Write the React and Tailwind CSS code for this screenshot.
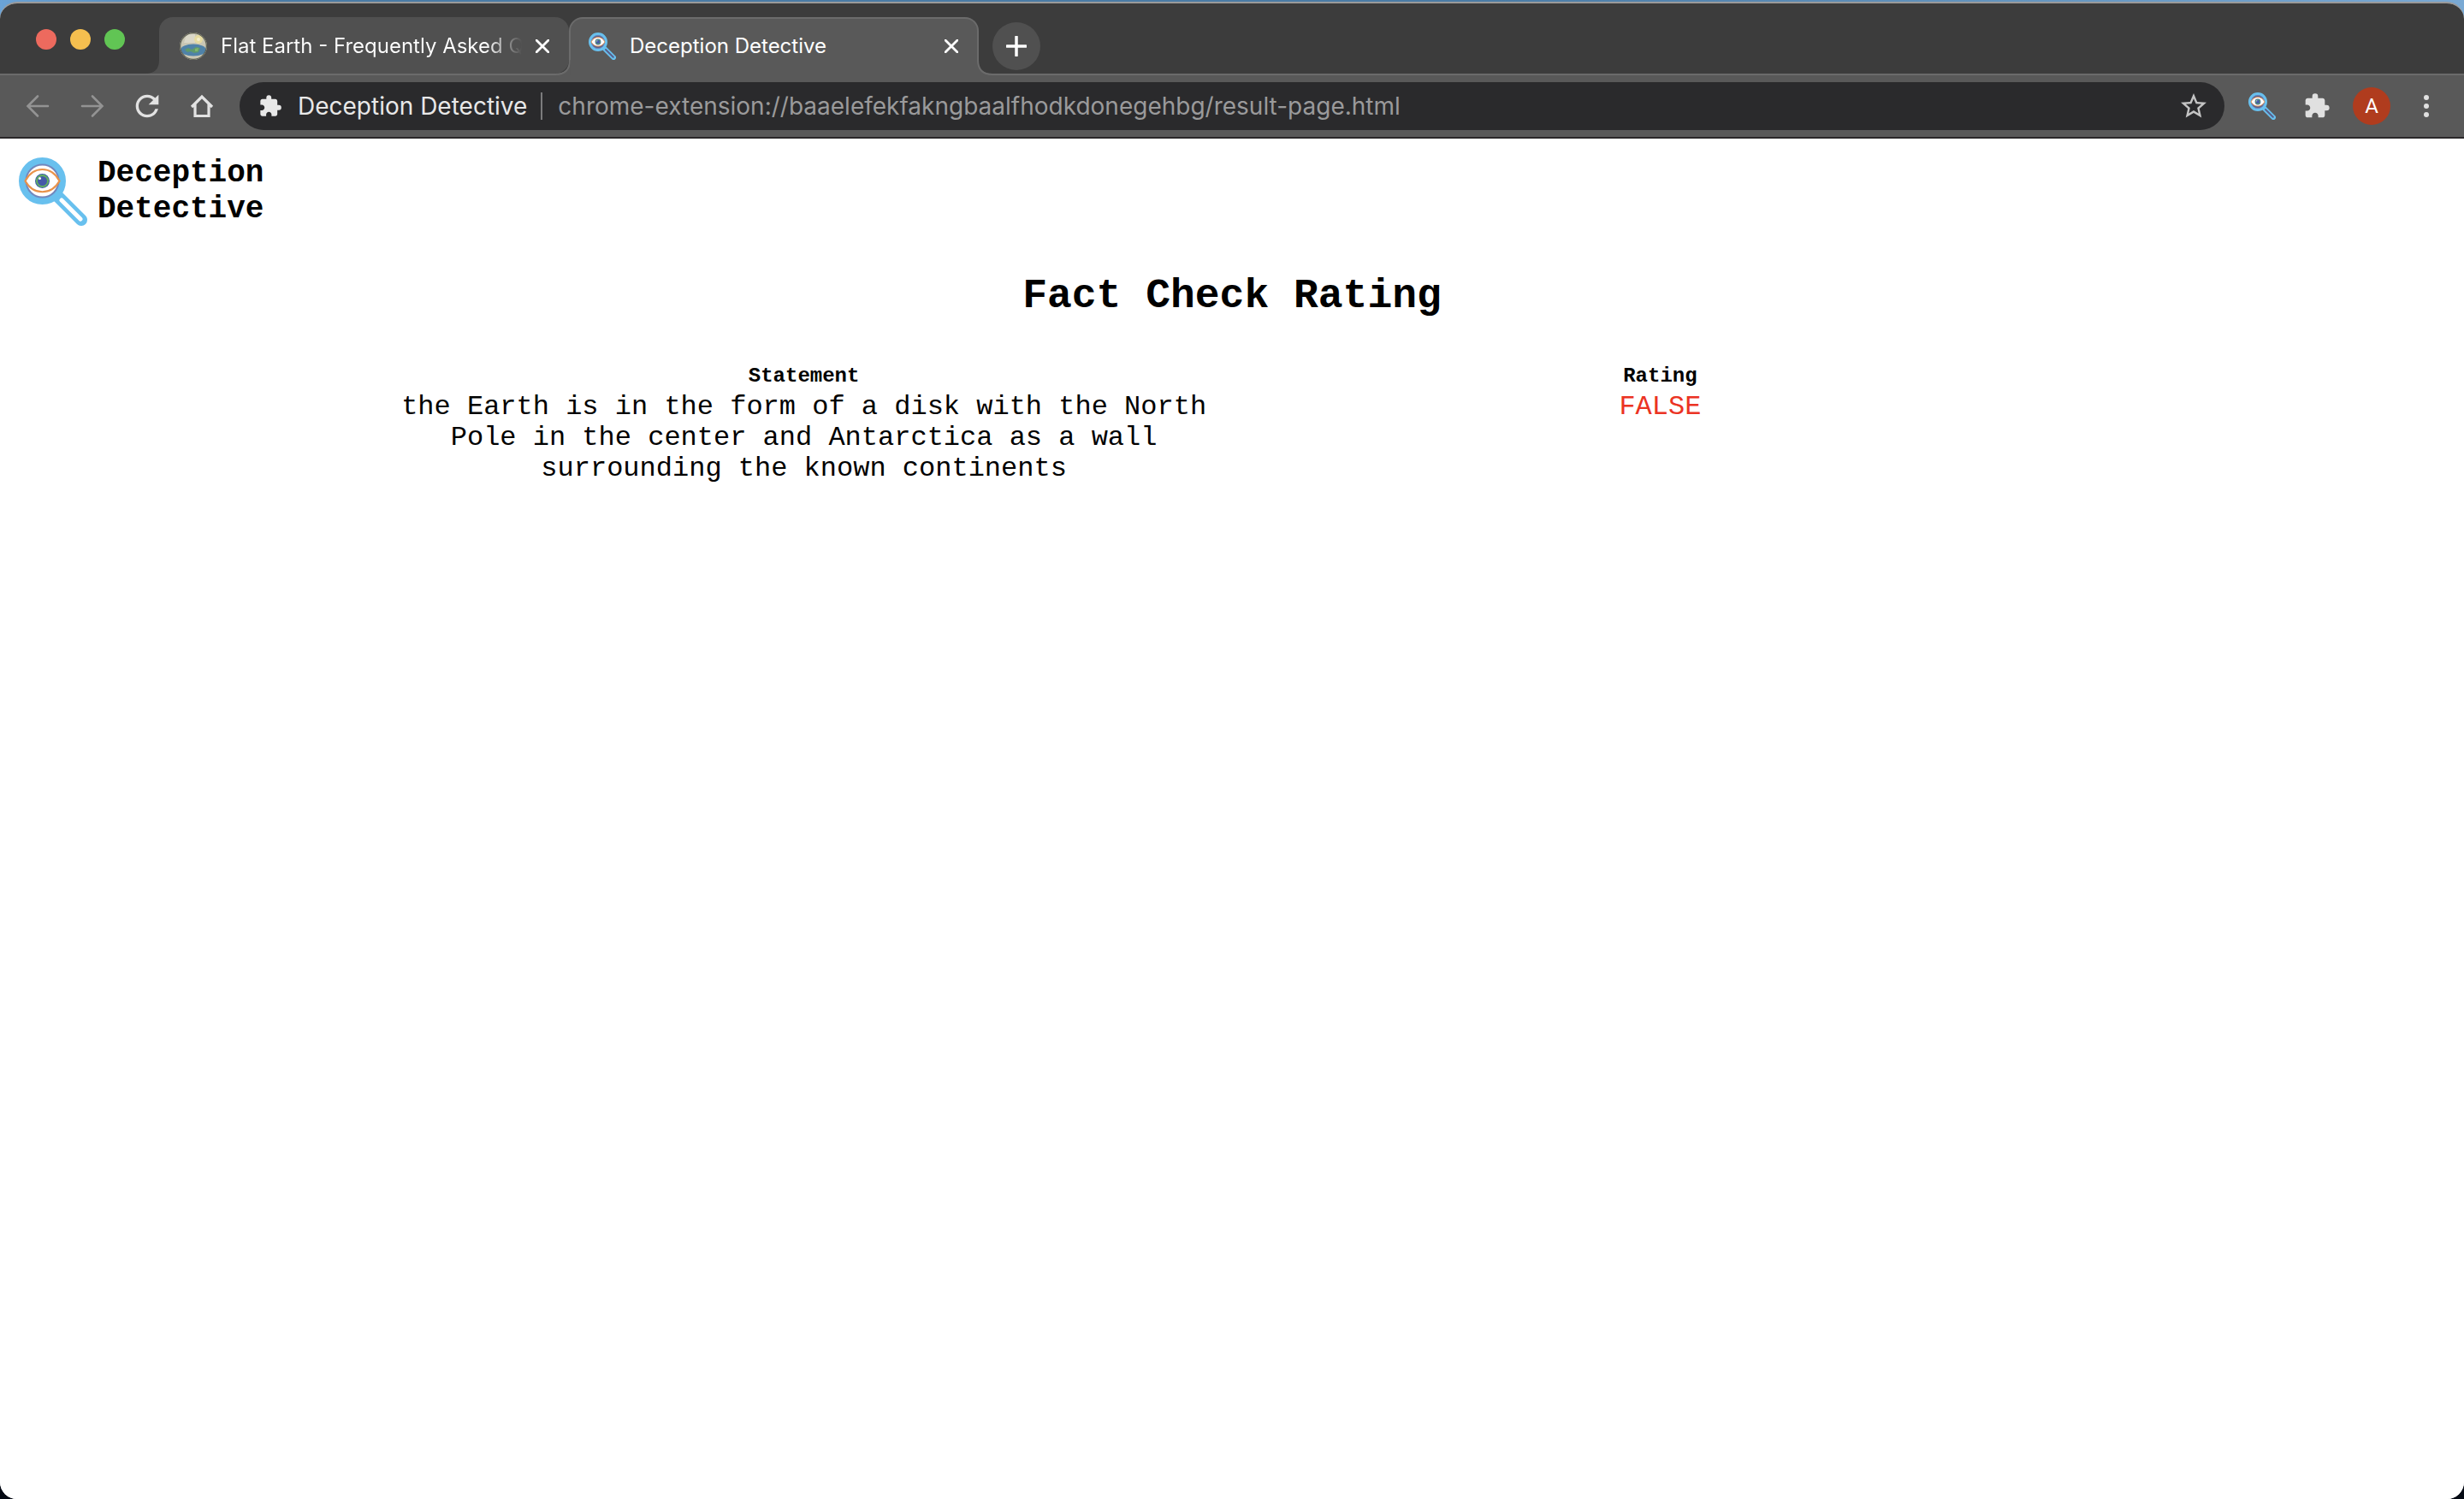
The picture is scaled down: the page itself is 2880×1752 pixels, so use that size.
import { MdExtension, MdStarBorder, MdRefresh } from "react-icons/md";

function Magnifier({ className, lens = "#ffffff" }) {
  return (
    <svg viewBox="0 0 80 80" className={className} aria-hidden="true">
      <path d="M46 46 L73 73" stroke="#68c0ee" strokeWidth="14" strokeLinecap="round" />
      <path d="M50 50 L72 72" stroke={lens} strokeWidth="5" strokeLinecap="round" />
      <circle cx="27.500" cy="27.500" r="23.500" fill={lens} stroke="#68c0ee" strokeWidth="8" />
      <circle cx="27.500" cy="27.500" r="19" fill="none" stroke="#7187bd" strokeWidth="2" />
      <path d="M7.500 27.500 C17 9.500 38 9.500 47.500 27.500 C38 44.500 17 44.500 7.500 27.500 Z" fill="#ffffff" stroke="#e8924a" strokeWidth="2.200" />
      <circle cx="27.500" cy="27.500" r="8.500" fill="#3f5da8" />
      <circle cx="27.500" cy="27.500" r="6.500" fill="#4459a8" stroke="#62b05f" strokeWidth="2" />
      <circle cx="24.500" cy="24.500" r="1.500" fill="#ffffff" />
    </svg>
  );
}

function EarthIcon() {
  return (
    <svg viewBox="0 0 32 32" className="size-8 shrink-0" aria-hidden="true">
      <defs>
        <clipPath id="globe">
          <circle cx="16" cy="16" r="16" />
        </clipPath>
      </defs>
      <g clipPath="url(#globe)">
        <rect width="32" height="32" fill="#c9c6b4" />
        <path d="M8 2H18V12H5Z" fill="#dad7c8" />
        <circle cx="22" cy="8" r="5" fill="#e6dba0" />
        <circle cx="22" cy="8" r="2" fill="#f3eecb" />
        <ellipse cx="16" cy="20.500" rx="15" ry="7" fill="#4f82a8" />
        <path d="M6 20L10 18L14 20L19 17L24 18L22 23L17 24L13 22L9 23Z" fill="#5f9a6b" />
        <path d="M18 19L22 18L21 22L18 22Z" fill="#7fb56f" />
        <circle cx="16" cy="16" r="15.500" fill="none" stroke="#5f6153" strokeWidth="1.500" />
      </g>
    </svg>
  );
}

function Cross() {
  return (
    <svg viewBox="0 0 16 16" className="size-4" aria-hidden="true">
      <path d="M0 0L16 16M16 0L0 16" stroke="#ffffff" strokeWidth="2.800" />
    </svg>
  );
}

function TabStrip() {
  return (
    <div className="flex h-[82px] items-stretch bg-[#3c3c3c] pt-4">
      <div className="flex w-[186px] shrink-0 items-start justify-between pt-[14px] pr-10 pl-[42px]">
        <button aria-label="Close window" className="size-6 rounded-full bg-[#ed6a5e]" />
        <button aria-label="Minimize window" className="size-6 rounded-full bg-[#f5bf4f]" />
        <button aria-label="Zoom window" className="size-6 rounded-full bg-[#61c554]" />
      </div>
      <div role="tablist" className="flex">
        <div className="relative flex w-[479px] items-center gap-4 rounded-t-2xl rounded-br-2xl bg-[#505050] pt-[2px] pr-[23px] pl-6">
          <svg viewBox="0 0 16 16" className="absolute bottom-0 -left-4 size-4" aria-hidden="true">
            <path d="M16 0V16H0Q16 16 16 0Z" fill="#505050" />
          </svg>
          <EarthIcon />
          <button role="tab" aria-selected="false" className="min-w-0 flex-1 bg-linear-to-r from-white from-88% to-transparent bg-clip-text text-left text-2xl whitespace-nowrap text-transparent">
            Flat Earth - Frequently Asked Q
          </button>
          <button aria-label="Close Flat Earth tab">
            <Cross />
          </button>
        </div>
        <div className="relative -mb-[2px] flex w-[479px] items-center gap-4 rounded-t-2xl border-2 border-b-0 border-[#6b6b6b] bg-[#595959] pr-[22px] pb-[2px] pl-[21px]">
          <svg viewBox="0 0 18 18" className="absolute bottom-0 -left-[18px] size-[18px]" aria-hidden="true">
            <path d="M18 0V18H0V16Q17 16 17 0Z" fill="#595959" />
            <path d="M0 17Q17 17 17 0" fill="none" stroke="#6b6b6b" strokeWidth="2" />
            <path d="M18 0V18" stroke="#595959" strokeWidth="1" />
          </svg>
          <svg viewBox="0 0 18 18" className="absolute -right-[18px] bottom-0 size-[18px]" aria-hidden="true">
            <path d="M0 0V18H18V16Q1 16 1 0Z" fill="#595959" />
            <path d="M18 17Q1 17 1 0" fill="none" stroke="#6b6b6b" strokeWidth="2" />
          </svg>
          <Magnifier className="size-8 shrink-0" lens="#595f8a" />
          <button role="tab" aria-selected="true" className="flex-1 text-left text-2xl whitespace-nowrap text-white">
            Deception Detective
          </button>
          <button aria-label="Close Deception Detective tab">
            <Cross />
          </button>
        </div>
      </div>
      <button aria-label="New tab" className="mt-[6px] ml-4 flex size-14 items-center justify-center rounded-full bg-[#505050]">
        <svg viewBox="0 0 24 24" className="size-6" aria-hidden="true">
          <path d="M12 1V23M1 12H23" stroke="#ffffff" strokeWidth="3.500" strokeLinecap="round" />
        </svg>
      </button>
    </div>
  );
}

function Toolbar() {
  return (
    <div className="flex h-[76px] items-center border-t-2 border-b-2 border-t-[#6b6b6b] border-b-[#2a2829] bg-[#595959] pr-6 pl-6">
      <nav className="flex gap-6">
        <button aria-label="Back" className="flex size-10 items-center justify-center">
          <svg viewBox="0 0 28 28" className="size-7" fill="none" stroke="#939393" strokeWidth="2.600" strokeLinecap="round" aria-hidden="true">
            <path d="M26 14H3M14 2.500L2.500 14L14 25.500" />
          </svg>
        </button>
        <button aria-label="Forward" className="flex size-10 items-center justify-center">
          <svg viewBox="0 0 28 28" className="size-7" fill="none" stroke="#939393" strokeWidth="2.600" strokeLinecap="round" aria-hidden="true">
            <path d="M2 14H25M14 2.500L25.500 14L14 25.500" />
          </svg>
        </button>
        <button aria-label="Reload" className="flex size-10 items-center justify-center">
          <MdRefresh className="size-10 text-[#e2e2e2]" />
        </button>
        <button aria-label="Home" className="flex size-10 items-center justify-center">
          <svg viewBox="0 0 28 28" className="size-7" fill="none" stroke="#e2e2e2" strokeWidth="3.200" aria-hidden="true">
            <path d="M2 15L14 3L26 15M6 12V25.500H22V12" />
          </svg>
        </button>
      </nav>
      <div className="ml-6 flex h-14 flex-1 items-center rounded-full bg-[#2a2a2c] pr-[18px] pl-[22px]">
        <MdExtension className="size-7 shrink-0 text-[#e8e8e8]" />
        <span className="ml-[18px] text-[28px] whitespace-nowrap text-[#e8e8e8]">Deception Detective</span>
        <span className="mr-[18px] ml-4 h-8 w-[2px] bg-[#7b7b7c]" />
        <input
          aria-label="Address"
          defaultValue="chrome-extension://baaelefekfakngbaalfhodkdonegehbg/result-page.html"
          className="min-w-0 flex-1 bg-transparent text-[28px] text-[#9a9a9b] outline-none"
        />
        <button aria-label="Bookmark this page">
          <MdStarBorder className="size-9 text-[#c4c4c4]" />
        </button>
      </div>
      <div className="ml-7 flex items-center">
        <button aria-label="Deception Detective extension">
          <Magnifier className="size-8" lens="#595f8a" />
        </button>
        <button aria-label="Extensions" className="ml-8">
          <MdExtension className="size-8 text-[#e0e0e0]" />
        </button>
        <button aria-label="Profile" className="ml-[26px] flex size-11 items-center justify-center rounded-full bg-[#b03c1e] font-[Roboto,sans-serif] text-2xl text-white">
          A
        </button>
        <button aria-label="Menu" className="ml-[22px] flex size-10 flex-col items-center justify-center gap-1">
          <span className="size-[6px] rounded-full bg-[#e0e0e0]" />
          <span className="size-[6px] rounded-full bg-[#e0e0e0]" />
          <span className="size-[6px] rounded-full bg-[#e0e0e0]" />
        </button>
      </div>
    </div>
  );
}

function ResultPage() {
  return (
    <main className="flex-1 bg-white font-['Liberation_Mono',monospace] text-black">
      <header className="flex items-center gap-3 pt-5 pl-[22px]">
        <Magnifier className="size-20" />
        <p className="w-56 text-[36px] leading-[42px] font-bold">Deception Detective</p>
      </header>
      <h1 className="mt-[52px] text-center text-5xl leading-[56px] font-bold">Fact Check Rating</h1>
      <table className="mx-auto mt-[52px] w-[69.5%] table-fixed text-center">
        <thead>
          <tr className="text-2xl leading-[28px]">
            <th className="p-0 font-bold">Statement</th>
            <th className="p-0 font-bold">Rating</th>
          </tr>
        </thead>
        <tbody>
          <tr className="align-top text-[32px] leading-9">
            <td className="p-0 pt-1">
              the Earth is in the form of a disk with the North Pole in the center and Antarctica as a wall surrounding the known continents
            </td>
            <td className="p-0 pt-1 text-[#eb3323]">FALSE</td>
          </tr>
        </tbody>
      </table>
    </main>
  );
}

export default function App() {
  return (
    <div className="flex min-h-screen flex-col bg-[linear-gradient(transparent_50%,#050a14_50%),linear-gradient(to_right,#6ba3d6,#4a7ba5_10%,#4a7ba5_60%,#79a9d4)] pt-[2px] font-[Inter,sans-serif]">
      <div className="flex flex-1 flex-col overflow-hidden rounded-[20px] border-t-2 border-[#9a9a9a] bg-white">
        <TabStrip />
        <Toolbar />
        <ResultPage />
      </div>
    </div>
  );
}
